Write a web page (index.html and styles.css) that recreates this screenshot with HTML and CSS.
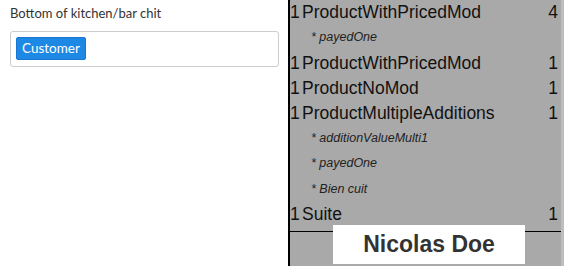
FILE: index.html
```html
<!DOCTYPE html>
<html>
<head>
<meta charset="utf-8">
<link rel="stylesheet" href="styles.css">
</head>
<body>
<div class="page">
  <div class="settings">
    <div class="label">Bottom of kitchen/bar chit</div>
    <div class="field">
      <span class="tag">Customer</span>
    </div>
  </div>
  <div class="chit">
    <div class="item"><span class="qty">1</span><span class="name">ProductWithPricedMod</span><span class="count">4</span></div>
    <div class="mod">* payedOne</div>
    <div class="item"><span class="qty">1</span><span class="name">ProductWithPricedMod</span><span class="count">1</span></div>
    <div class="item"><span class="qty">1</span><span class="name">ProductNoMod</span><span class="count">1</span></div>
    <div class="item"><span class="qty">1</span><span class="name">ProductMultipleAdditions</span><span class="count">1</span></div>
    <div class="mod">* additionValueMulti1</div>
    <div class="mod">* payedOne</div>
    <div class="mod">* Bien cuit</div>
    <div class="item"><span class="qty">1</span><span class="name">Suite</span><span class="count">1</span></div>
    <div class="footer">
      <div class="customer">Nicolas Doe</div>
    </div>
  </div>
</div>
</body>
</html>
```

FILE: styles.css
```css
html, body {
  margin: 0;
  padding: 0;
  background: #fff;
  height: 100%;
  overflow: hidden;
}
.page {
  display: flex;
  width: 564px;
  height: 266px;
}
.settings {
  width: 288px;
  flex: none;
  padding: 0 9px 0 10px;
  box-sizing: border-box;
  font-family: Lato, "Liberation Sans", sans-serif;
}
.label {
  font-size: 13px;
  line-height: 16px;
  color: #333;
  padding-top: 5px;
}
.field {
  margin-top: 10px;
  height: 36px;
  border: 1px solid #ccc;
  border-radius: 3px;
  box-sizing: border-box;
  padding: 5px;
  display: flex;
  align-items: flex-start;
}
.tag {
  display: inline-block;
  height: 23px;
  line-height: 21px;
  box-sizing: border-box;
  padding: 0 5px;
  background: #1e88e5;
  border: 1px solid #1976d2;
  border-radius: 2px;
  color: #fff;
  font-size: 13.5px;
}
.chit {
  flex: 1;
  background: #a9a9a9;
  border-left: 2px solid #000;
  border-right: 3px solid #bdbdbd;
  font-family: "Liberation Sans", Arial, sans-serif;
  color: #111;
}
.item {
  display: flex;
  height: 25px;
  line-height: 25px;
  font-size: 17.5px;
  padding-right: 3px;
}
.qty {
  width: 12px;
}
.name {
  flex: 1;
}
.mod {
  height: 25.5px;
  line-height: 25px;
  font-size: 12.5px;
  font-style: italic;
  padding-left: 21px;
  color: #222;
}
.footer {
  margin-top: 4px;
  border-top: 1px solid #000;
  display: flex;
  justify-content: center;
}
.customer {
  margin-top: -7px;
  margin-left: 7px;
  width: 192px;
  height: 39px;
  background: #fff;
  text-align: center;
  font-weight: bold;
  font-size: 23px;
  line-height: 39px;
  color: #333;
}
```
